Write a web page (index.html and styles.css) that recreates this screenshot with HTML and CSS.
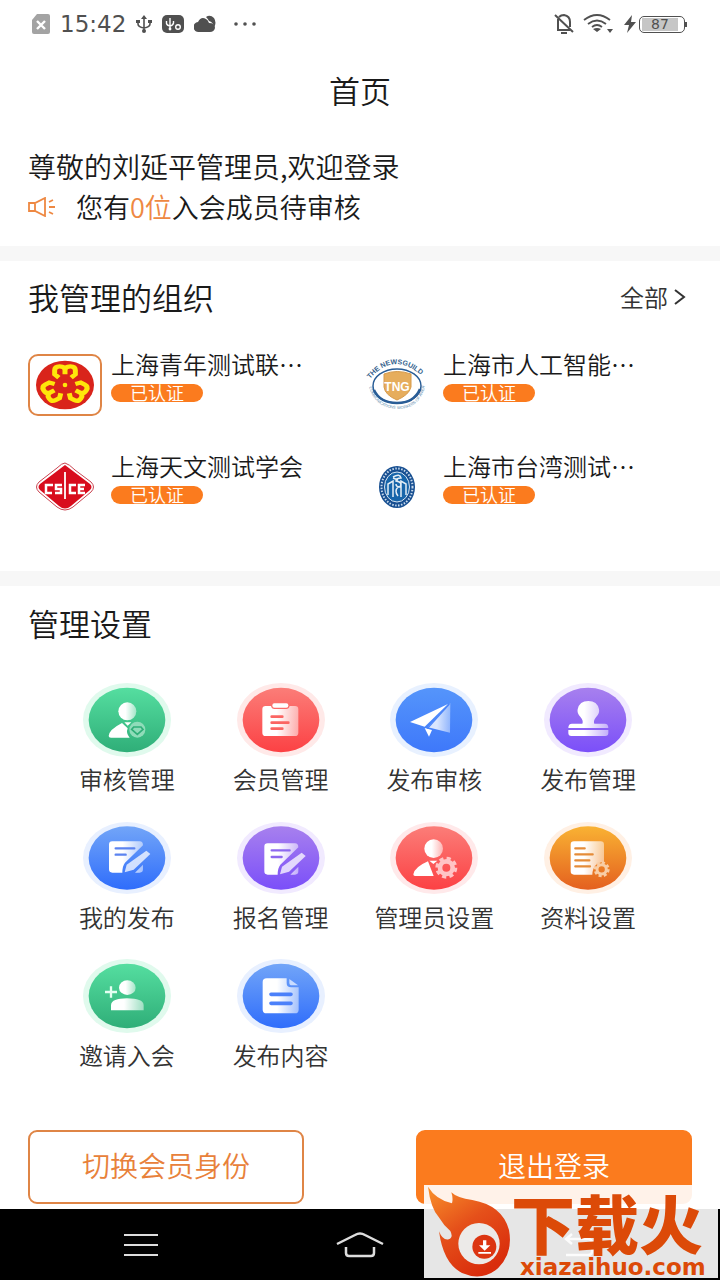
FILE: index.html
```html
<!DOCTYPE html>
<html lang="zh-CN">
<head>
    <meta charset="UTF-8">
    <meta name="viewport" content="width=device-width, initial-scale=1">
    <title>首页</title>
    <link rel="stylesheet" href="styles.css">
</head>
<body>
    <!-- 公用渐变 -->
    <svg class="defs" aria-hidden="true">
        <defs>
            <linearGradient id="green" x2="0" y2="1"><stop offset="0" stop-color="#55dea0"/><stop offset="1" stop-color="#2fae78"/></linearGradient>
            <linearGradient id="red" x2="0" y2="1"><stop offset="0" stop-color="#fb7d78"/><stop offset="1" stop-color="#fc4144"/></linearGradient>
            <linearGradient id="blue" x2="0" y2="1"><stop offset="0" stop-color="#72a5f8"/><stop offset="1" stop-color="#2f6dfb"/></linearGradient>
            <linearGradient id="sky" x2="0" y2="1"><stop offset="0" stop-color="#5595fb"/><stop offset="1" stop-color="#3e78fa"/></linearGradient>
            <linearGradient id="purple" x2="0" y2="1"><stop offset="0" stop-color="#a780ee"/><stop offset="1" stop-color="#7b4ff9"/></linearGradient>
            <linearGradient id="orange" x2="0" y2="1"><stop offset="0" stop-color="#f9b233"/><stop offset="1" stop-color="#e4601f"/></linearGradient>
            <linearGradient id="fade"><stop offset="0.4" stop-color="#fff"/><stop offset="1" stop-color="#fff" stop-opacity="0.5"/></linearGradient>
            <linearGradient id="flame" x2="0.6" y2="1"><stop offset="0" stop-color="#f9912a"/><stop offset="0.5" stop-color="#e5501a"/><stop offset="1" stop-color="#d92d0c"/></linearGradient>
        </defs>
    </svg>

    <div class="status-bar">
        <div class="status-left">
            <svg width="18" height="20" viewBox="0 0 18 20"><path d="M5 0h11a2 2 0 0 1 2 2v16a2 2 0 0 1-2 2H2a2 2 0 0 1-2-2V6z" fill="#a3a3a3"/><path d="M5 7l8 8M13 7l-8 8" stroke="#fff" stroke-width="2.4"/></svg>
            <span class="time">15:42</span>
            <svg width="16" height="18" viewBox="0 0 16 18" fill="none" stroke="#505050" stroke-width="1.6"><path d="M8 2v14M2 7v2q0 3 6 4q6-1 6-4V7"/><path d="M8 0l3 4H5zM0 5h4v3H0zM12 5h4v3h-4z" fill="#505050" stroke="none"/><circle cx="8" cy="16" r="2" fill="#505050" stroke="none"/></svg>
            <svg width="22" height="18" viewBox="0 0 22 18"><rect width="22" height="18" rx="5" fill="#505050"/><g fill="none" stroke="#fff" stroke-width="1.4"><path d="M8 3v11M4.500 6v2.500q.5 2 3.500 2.500q3-.5 3.500-3V6"/><circle cx="16" cy="12" r="2.300"/></g><circle cx="8" cy="14" r="1.400" fill="#fff"/></svg>
            <svg width="22" height="18" viewBox="0 0 22 18" fill="#505050"><path d="M12 2q4-3 8 1q3 5 0 9q-1-5-5-6q-1-2-3-4z"/><path d="M5 17a5 5 0 0 1-1-10q3-6 8-3q2 1 3 4q6 0 6 5q-1 4-5 4z"/></svg>
            <svg class="dots" width="22" height="4" viewBox="0 0 22 4" fill="#505050"><circle cx="2" cy="2" r="1.800"/><circle cx="11" cy="2" r="1.800"/><circle cx="20" cy="2" r="1.800"/></svg>
        </div>
        <div class="status-right">
            <svg width="20" height="22" viewBox="0 0 20 22" fill="none" stroke="#505050" stroke-width="2"><path d="M5 4q2-2 5-2q6 1 6 7v5M4 6v11h12M1 2l18 17"/><path d="M7 20h6"/></svg>
            <svg class="wifi" width="30" height="20" viewBox="0 0 30 20" fill="none" stroke="#505050" stroke-width="1.800"><path d="M1 6q13-10 26 0M5 10q9-7 18 0M9 13q5-4 10 0"/><path d="M10 15q4-2 8 0l-4 3zM24 15h6l-3 4z" fill="#505050" stroke="none"/></svg>
            <svg width="12" height="18" viewBox="0 0 12 18"><path d="M8 0L0 10h5l-2 8l9-11H7z" fill="#505050"/></svg>
            <span class="battery"><span>87</span></span>
        </div>
    </div>

    <main>
        <h1>首页</h1>

        <section class="welcome">
            <p class="hello">尊敬的刘延平管理员,欢迎登录</p>
            <p class="notice">
                <svg width="28" height="20" viewBox="0 0 28 20" fill="none" stroke="#ee8842" stroke-width="1.800"><path d="M1 6h6l10-5v18L7 14H1zM7 6v8M21 5l4-2M21 10h6M21 15l4 2"/></svg>
                <span>您有<em>0位</em>入会成员待审核</span>
            </p>
        </section>

        <section class="orgs">
            <div class="section-head">
                <h2>我管理的组织</h2>
                <a class="more" href="#">全部
                    <svg width="12" height="16" viewBox="0 0 12 16" fill="none" stroke="#333" stroke-width="2"><path d="M1 1l9 7l-9 7"/></svg>
                </a>
            </div>
            <div class="org-grid">
                <a class="org" href="#">
                    <span class="logo active">
                        <svg width="60" height="50" viewBox="-90 -75 180 150">
                            <ellipse rx="87" ry="73" fill="#d9241b"/>
                            <g transform="scale(1.150 1)" fill="none" stroke="#ffe60a" stroke-width="13">
                                <path id="petal" d="M-16-22L-27-32V-44q0-12 13-12q14 0 14 12V-32V-44q0-12 14-12q13 0 13 12V-32L16-22"/>
                                <use href="#petal" transform="rotate(120)"/>
                                <use href="#petal" transform="rotate(240)"/>
                            </g>
                            <circle r="16" fill="#d9241b"/>
                            <circle r="7" fill="#ffe60a"/>
                        </svg>
                    </span>
                    <span class="org-info"><span class="org-name">上海青年测试联…</span><span class="badge">已认证</span></span>
                </a>
                <a class="org" href="#">
                    <span class="logo">
                        <svg class="seal" width="60" height="54" viewBox="0 0 60 54">
                            <path id="arc-top" d="M3 21Q28-9 58 21" fill="none"/>
                            <path id="arc-low" d="M2 29Q8 51 32 51Q53 50 58 28" fill="none"/>
                            <text class="seal-name" fill="#34618d"><textPath href="#arc-top">THE NEWSGUILD</textPath></text>
                            <text class="seal-small" fill="#5c8bae"><textPath href="#arc-low">COMMUNICATIONS WORKERS OF AMERICA</textPath></text>
                            <ellipse cx="30" cy="28" rx="24" ry="17" fill="#fff" stroke="#295d96" stroke-width="1.500"/>
                            <path d="M7 32q6 13 23 13q17 0 23-14" fill="none" stroke="#295d96" stroke-width="2.500"/>
                            <path d="M17 16q13-5 27 0v13q-2 8-14 13q-12-5-13-13z" fill="#e6ad5d" stroke="#d79a4a"/>
                            <text class="tng" x="30" y="33" fill="#fff">TNG</text>
                        </svg>
                    </span>
                    <span class="org-info"><span class="org-name">上海市人工智能…</span><span class="badge">已认证</span></span>
                </a>
                <a class="org" href="#">
                    <span class="logo">
                        <svg width="60" height="50" viewBox="0 0 60 50">
                            <path d="M30 1Q34 2 40 8L56 20Q61 25 56 30L38 45Q30 51 22 45L4 30Q-1 25 4 20L22 6Q27 1 30 1z" fill="#fff" stroke="#ca4350"/>
                            <path d="M30 3L55 22Q58 25 55 28L36 44Q30 49 24 44L5 28Q2 25 5 22z" fill="#d80c1d"/>
                            <g fill="none" stroke="#fff" stroke-width="2.500"><path d="M18 23h-7v8h6M27 23h-6v4h5v4h-6M41 23h-6v8h6M50 23h-6v8h6M44 27h5"/><path d="M30 10v27" stroke-width="1.800"/></g>
                        </svg>
                    </span>
                    <span class="org-info"><span class="org-name">上海天文测试学会</span><span class="badge">已认证</span></span>
                </a>
                <a class="org" href="#">
                    <span class="logo">
                        <svg width="38" height="44" viewBox="0 0 38 44">
                            <ellipse cx="19" cy="22" rx="18" ry="21" fill="#174f91"/>
                            <ellipse cx="19" cy="22" rx="15.500" ry="18.500" fill="none" stroke="#c7d9eb" stroke-width="2" stroke-dasharray="1.500 1.500"/>
                            <ellipse cx="19" cy="22" rx="12.500" ry="15" fill="#1765aa" stroke="#d9e6f2"/>
                            <g fill="none" stroke="#e3edf5" stroke-width="1.500"><path d="M10 30V19l5-3v16M28 30V19l-5-3v16M15 12q7-4 8 1q-5 0-5 3q7 1 4 6q-4 0-4-3M20 22q-4 4 0 9M15 13l5 2"/></g>
                        </svg>
                    </span>
                    <span class="org-info"><span class="org-name">上海市台湾测试…</span><span class="badge">已认证</span></span>
                </a>
            </div>
        </section>

        <section class="settings">
            <h2>管理设置</h2>
            <nav class="menu">
                <a href="#">
                    <svg class="icon" viewBox="-135 -114 270 228">
                        <ellipse rx="132" ry="111" fill="#e0faed"/><ellipse rx="115" ry="97" fill="url(#green)"/>
                        <circle cx="1" cy="-26" r="27" fill="url(#fade)"/>
                        <path d="M-55 48Q-54 29-15 9L2 25Q-4 40 8 53H-48q-7 0-7-5zM-8 7H13L2 17z" fill="#fff"/>
                        <circle cx="31" cy="29" r="24" fill="#8fdcb9"/>
                        <path d="M20 21h22l6 7l-17 15l-17-15z" fill="none" stroke="#2fae78" stroke-width="5"/>
                    </svg>
                    <span>审核管理</span>
                </a>
                <a href="#">
                    <svg class="icon" viewBox="-135 -114 270 228">
                        <ellipse rx="132" ry="111" fill="#ffe9e8"/><ellipse rx="115" ry="97" fill="url(#red)"/>
                        <path d="M-46-42h16q2 9 10 9h36q8 0 10-9h16q10 0 10 10v70q0 10-10 10h-88q-10 0-10-10v-70q0-10 10-10z" fill="url(#fade)"/>
                        <rect x="-26" y="-50" width="48" height="13" rx="6" fill="#fff"/>
                        <path d="M-28-10H4M-28 8H22M-28 26H4" stroke="#fb6563" stroke-width="8" stroke-linecap="round"/>
                    </svg>
                    <span>会员管理</span>
                </a>
                <a href="#">
                    <svg class="icon" viewBox="-135 -114 270 228">
                        <ellipse rx="132" ry="111" fill="#e8f1ff"/><ellipse rx="115" ry="97" fill="url(#sky)"/>
                        <path d="M-72 6L42-48L-28 20z" fill="#fff"/><path d="M49-51L48 38L-18 22z" fill="url(#fade)" opacity="0.800"/><path d="M-28 24L-6 30L-15 50z" fill="#fff"/>
                        <path d="M-20 26L46-48" stroke="#4b84fa" stroke-width="4"/>
                    </svg>
                    <span>发布审核</span>
                </a>
                <a href="#">
                    <svg class="icon" viewBox="-135 -114 270 228">
                        <ellipse rx="132" ry="111" fill="#f1eaff"/><ellipse rx="115" ry="97" fill="url(#purple)"/>
                        <path d="M-17 11Q-13 3-22-8Q-34-20-31-32Q-26-57 1-57Q28-57 33-32Q36-20 24-8Q15 3 19 11H50q11 0 11 13H-59q0-13 11-13zM-59 30H61V39q0 9-9 9H-50q-9 0-9-9z" fill="url(#fade)"/>
                    </svg>
                    <span>发布管理</span>
                </a>
                <a href="#">
                    <svg class="icon" viewBox="-135 -114 270 228">
                        <ellipse rx="132" ry="108" fill="#e8f0ff"/><ellipse rx="115" ry="95" fill="url(#blue)"/>
                        <path d="M-44-50H38q10 0 10 12L-6 14Q-14 24-14 44H-44q-10 0-10-10V-40q0-10 10-10zM48 20V34q0 10-10 10H24z" fill="url(#fade)"/>
                        <path d="M58-22l12 10L20 35L-7 43l6-23z" fill="#fff" opacity="0.750"/>
                        <path d="M-34-29H22M-34-10H-4" stroke="#5b83f0" stroke-width="7" stroke-linecap="round"/>
                    </svg>
                    <span>我的发布</span>
                </a>
                <a href="#">
                    <svg class="icon" viewBox="-135 -114 270 228">
                        <ellipse rx="132" ry="108" fill="#f1eaff"/><ellipse rx="115" ry="95" fill="url(#purple)"/>
                        <path d="M-40-44H42q10 0 10 12L-2 20Q-10 30-10 50H-40q-10 0-10-10V-34q0-10 10-10zM52 26V40q0 10-10 10H28z" fill="url(#fade)"/>
                        <path d="M62-16l12 10L24 41L-3 49l6-23z" fill="#fff" opacity="0.750"/>
                        <path d="M-28-23H26M-28-3H2" stroke="#8d68ef" stroke-width="7" stroke-linecap="round"/>
                    </svg>
                    <span>报名管理</span>
                </a>
                <a href="#">
                    <svg class="icon" viewBox="-135 -114 270 228">
                        <ellipse rx="132" ry="108" fill="#ffe9ea"/><ellipse rx="115" ry="95" fill="url(#red)"/>
                        <circle cx="-1" cy="-28" r="28" fill="url(#fade)"/>
                        <path d="M-62 49Q-58 27-18 10L-1 54H-57q-5 0-5-5zM-14 8H10L-2 18z" fill="#fff"/>
                        <circle cx="37" cy="29" r="19" fill="none" stroke="#ffc4c5" stroke-width="14"/>
                        <circle cx="37" cy="29" r="27" fill="none" stroke="#ffc4c5" stroke-width="12" stroke-dasharray="12 9.200"/>
                    </svg>
                    <span>管理员设置</span>
                </a>
                <a href="#">
                    <svg class="icon" viewBox="-135 -114 270 228">
                        <ellipse rx="132" ry="108" fill="#fff0e4"/><ellipse rx="115" ry="95" fill="url(#orange)"/>
                        <path d="M-42-50H38q10 0 10 10V12Q14 14 13 50H-42q-10 0-10-10V-40q0-10 10-10z" fill="url(#fade)"/>
                        <path d="M-38-29H-10M-38-11H14M-38 7H4M-38 25H6" stroke="#e58c38" stroke-width="7" stroke-linecap="round"/>
                        <circle cx="41" cy="34" r="14" fill="none" stroke="#f8cda5" stroke-width="9"/>
                        <circle cx="41" cy="34" r="20" fill="none" stroke="#f8cda5" stroke-width="8" stroke-dasharray="9 6.710"/>
                    </svg>
                    <span>资料设置</span>
                </a>
                <a href="#">
                    <svg class="icon" viewBox="-135 -114 270 228">
                        <ellipse rx="132" ry="111" fill="#e0faed"/><ellipse rx="115" ry="97" fill="url(#green)"/>
                        <ellipse cx="1" cy="-25" rx="25" ry="22" fill="url(#fade)"/>
                        <path d="M-48 43V27Q-46 7 0 7Q48 7 50 27V43z" fill="url(#fade)"/>
                        <path d="M-48-29V5M-66-12H-30" stroke="#e3fff1" stroke-width="7"/>
                    </svg>
                    <span>邀请入会</span>
                </a>
                <a href="#">
                    <svg class="icon" viewBox="-135 -114 270 228">
                        <ellipse rx="132" ry="111" fill="#e8f0ff"/><ellipse rx="115" ry="97" fill="url(#blue)"/>
                        <path d="M-43-53H17V-39q0 13 13 13H53V41q0 11-11 11H-43q-12 0-12-11V-42q0-11 12-11z" fill="url(#fade)"/>
                        <path d="M25-51L51-32H33q-8 0-8-8z" fill="#c9dcff"/>
                        <path d="M-30-5H30M-30 22H30" stroke="#4b80fa" stroke-width="11" stroke-linecap="round"/>
                    </svg>
                    <span>发布内容</span>
                </a>
            </nav>
            <div class="actions">
                <button class="btn btn-outline" type="button">切换会员身份</button>
                <button class="btn btn-primary" type="button">退出登录</button>
            </div>
        </section>
    </main>

    <footer class="nav-bar">
        <button type="button" aria-label="菜单"><svg width="34" height="24" viewBox="0 0 34 24" stroke="#ddd" stroke-width="2"><path d="M0 2h34M0 12h34M0 22h34"/></svg></button>
        <button type="button" aria-label="主页"><svg width="48" height="26" viewBox="0 0 48 26" fill="none" stroke="#ddd" stroke-width="2.500"><path d="M1 12L19 3q5-3 10 0l18 9M10 15v6q0 3 3 3h22q3 0 3-3v-6"/></svg></button>
        <button type="button" aria-label="返回"><svg width="30" height="24" viewBox="0 0 30 24" fill="none" stroke="#ddd" stroke-width="2.500"><path d="M8 1L2 6l6 5M2 6h22q4 0 4 4v8q0 4-4 4H2"/></svg></button>
    </footer>

    <!-- 右下角水印 -->
    <div class="watermark">
        <svg width="87" height="93" viewBox="0 0 261 279">
            <path fill="url(#flame)" d="M12 5Q35 43 84 55Q88 40 82 22Q99 39 145 45Q235 61 255 135Q268 204 222 250Q174 290 114 264Q58 236 45 139Q56 167 74 163Q89 158 79 138Q58 120 44 96Q20 69 12 5z"/>
            <circle cx="165" cy="176" r="62" fill="#eceae8"/>
            <circle cx="181" cy="185" r="36" fill="#dc3511"/>
            <path d="M177 166h10v15h12l-17 16l-17-16h12zM163 201h38v5h-38z" fill="#fff"/>
        </svg>
        <div class="watermark-text">
            <strong>下载火</strong>
            <span>xiazaihuo.com</span>
        </div>
    </div>
</body>
</html>
```
FILE: styles.css
```css
* {
    box-sizing: border-box;
}
body {
    margin: 0;
    min-height: 100vh;
    display: flex;
    flex-direction: column;
    position: relative;
    background: #fff;
    color: #1a1a1a;
    font-family: "Noto Sans CJK SC", sans-serif;
    font-weight: 350;
}
h1, h2, p {
    margin: 0;
    font-weight: 350;
}
a {
    color: inherit;
    text-decoration: none;
}
svg {
    display: block;
    flex: none;
}
.defs {
    position: absolute;
    width: 0;
    height: 0;
}

/* 状态栏 */
.status-bar {
    display: flex;
    justify-content: space-between;
    align-items: center;
    height: 48px;
    padding: 0 35px 0 32px;
}
.status-left, .status-right {
    display: flex;
    align-items: center;
    gap: 10px;
}
.status-right {
    gap: 3px;
}
.time {
    color: #505050;
    font: 23px/30px "DejaVu Sans", sans-serif;
}
.dots {
    margin-left: 8px;
}
.wifi {
    margin: 0 8px 0 6px;
}
.battery {
    position: relative;
    width: 46px;
    height: 17px;
    padding: 1px 6px 1px 2px;
    border: 1px solid #505050;
    border-radius: 5px;
}
.battery::after {
    content: "";
    position: absolute;
    top: 5px;
    right: -3px;
    width: 2px;
    height: 5px;
    background: #505050;
}
.battery span {
    display: block;
    background: #c6c6c6;
    color: #505050;
    font: 14px/13px "DejaVu Sans", sans-serif;
    text-align: center;
}

main {
    flex: 1;
}
h1 {
    padding: 12px 0 17px;
    font-size: 31px;
    line-height: 60px;
    text-align: center;
}
h2 {
    font-size: 31px;
    line-height: 38px;
}

/* 欢迎语 */
.welcome {
    padding: 9px 28px 18px;
}
.hello {
    font-size: 28px;
    line-height: 40px;
}
.notice {
    display: flex;
    align-items: center;
    gap: 20px;
    font-size: 27px;
    line-height: 42px;
}
.notice em {
    color: #ee8842;
    font-style: normal;
}

/* 组织 */
.orgs {
    padding: 17px 28px 53px;
    border-top: 15px solid #f7f7f7;
    border-bottom: 15px solid #f7f7f7;
}
.section-head {
    display: flex;
    justify-content: space-between;
    align-items: center;
    margin-bottom: 38px;
}
.more {
    display: flex;
    align-items: center;
    gap: 6px;
    padding-right: 6px;
    color: #333;
    font-size: 24px;
    line-height: 38px;
}
.org-grid {
    display: grid;
    grid-template-columns: 1fr 1fr;
    row-gap: 40px;
}
.org {
    display: flex;
    gap: 9px;
}
.logo {
    display: flex;
    align-items: center;
    justify-content: center;
    width: 74px;
    height: 62px;
}
.logo.active {
    border: 2px solid #df8546;
    border-radius: 10px;
}
.org-info {
    display: flex;
    flex-direction: column;
    align-items: flex-start;
    gap: 10px;
}
.org-name {
    font-size: 24px;
    line-height: 20px;
    white-space: nowrap;
}
.badge {
    width: 92px;
    padding-bottom: 2px;
    border-radius: 9px;
    background: #fb7b1e;
    color: #fff;
    font-size: 18px;
    line-height: 16px;
    text-align: center;
}
.seal {
    overflow: visible;
}
.seal-name {
    font: bold 7px "Liberation Sans", sans-serif;
}
.seal-small {
    font: 4px "Liberation Sans", sans-serif;
}
.tng {
    font: bold 12px "Liberation Sans", sans-serif;
    text-anchor: middle;
}

/* 管理设置 */
.settings {
    padding: 18px 28px 5px;
}
.menu {
    display: grid;
    grid-template-columns: repeat(4, 1fr);
    row-gap: 26px;
    padding: 40px 27px 60px 22px;
}
.menu a {
    display: flex;
    flex-direction: column;
    align-items: center;
    gap: 6px;
    color: #333;
    font-size: 24px;
    line-height: 30px;
    white-space: nowrap;
}
.icon {
    width: 90px;
    height: 76px;
}
.actions {
    display: flex;
    justify-content: space-between;
    gap: 112px;
}
.btn {
    flex: 1;
    height: 74px;
    padding-bottom: 6px;
    border: 2px solid #fb7b1e;
    border-radius: 9px;
    font: inherit;
    font-size: 28px;
}
.btn-outline {
    border-color: #df8546;
    background: #fff;
    color: #e8813a;
}
.btn-primary {
    background: #fb7b1e;
    color: #fff;
}

/* 底部导航 */
.nav-bar {
    display: flex;
    height: 71px;
    padding: 0 31px;
    background: #000;
}
.nav-bar button {
    flex: 1;
    display: flex;
    align-items: center;
    justify-content: center;
    padding: 0;
    border: 0;
    background: none;
}

.watermark {
    position: absolute;
    right: 2px;
    bottom: 2px;
    display: flex;
    width: 294px;
    height: 93px;
    background: rgba(255, 255, 255, 0.9);
    color: #dc4a08;
}
.watermark-text {
    display: flex;
    flex-direction: column;
    gap: 8px;
    padding-top: 8px;
}
.watermark strong {
    font-size: 64px;
    font-weight: 900;
    line-height: 56px;
    white-space: nowrap;
}
.watermark-text span {
    padding-left: 9px;
    font: bold 23px/20px "DejaVu Sans", sans-serif;
}
```
